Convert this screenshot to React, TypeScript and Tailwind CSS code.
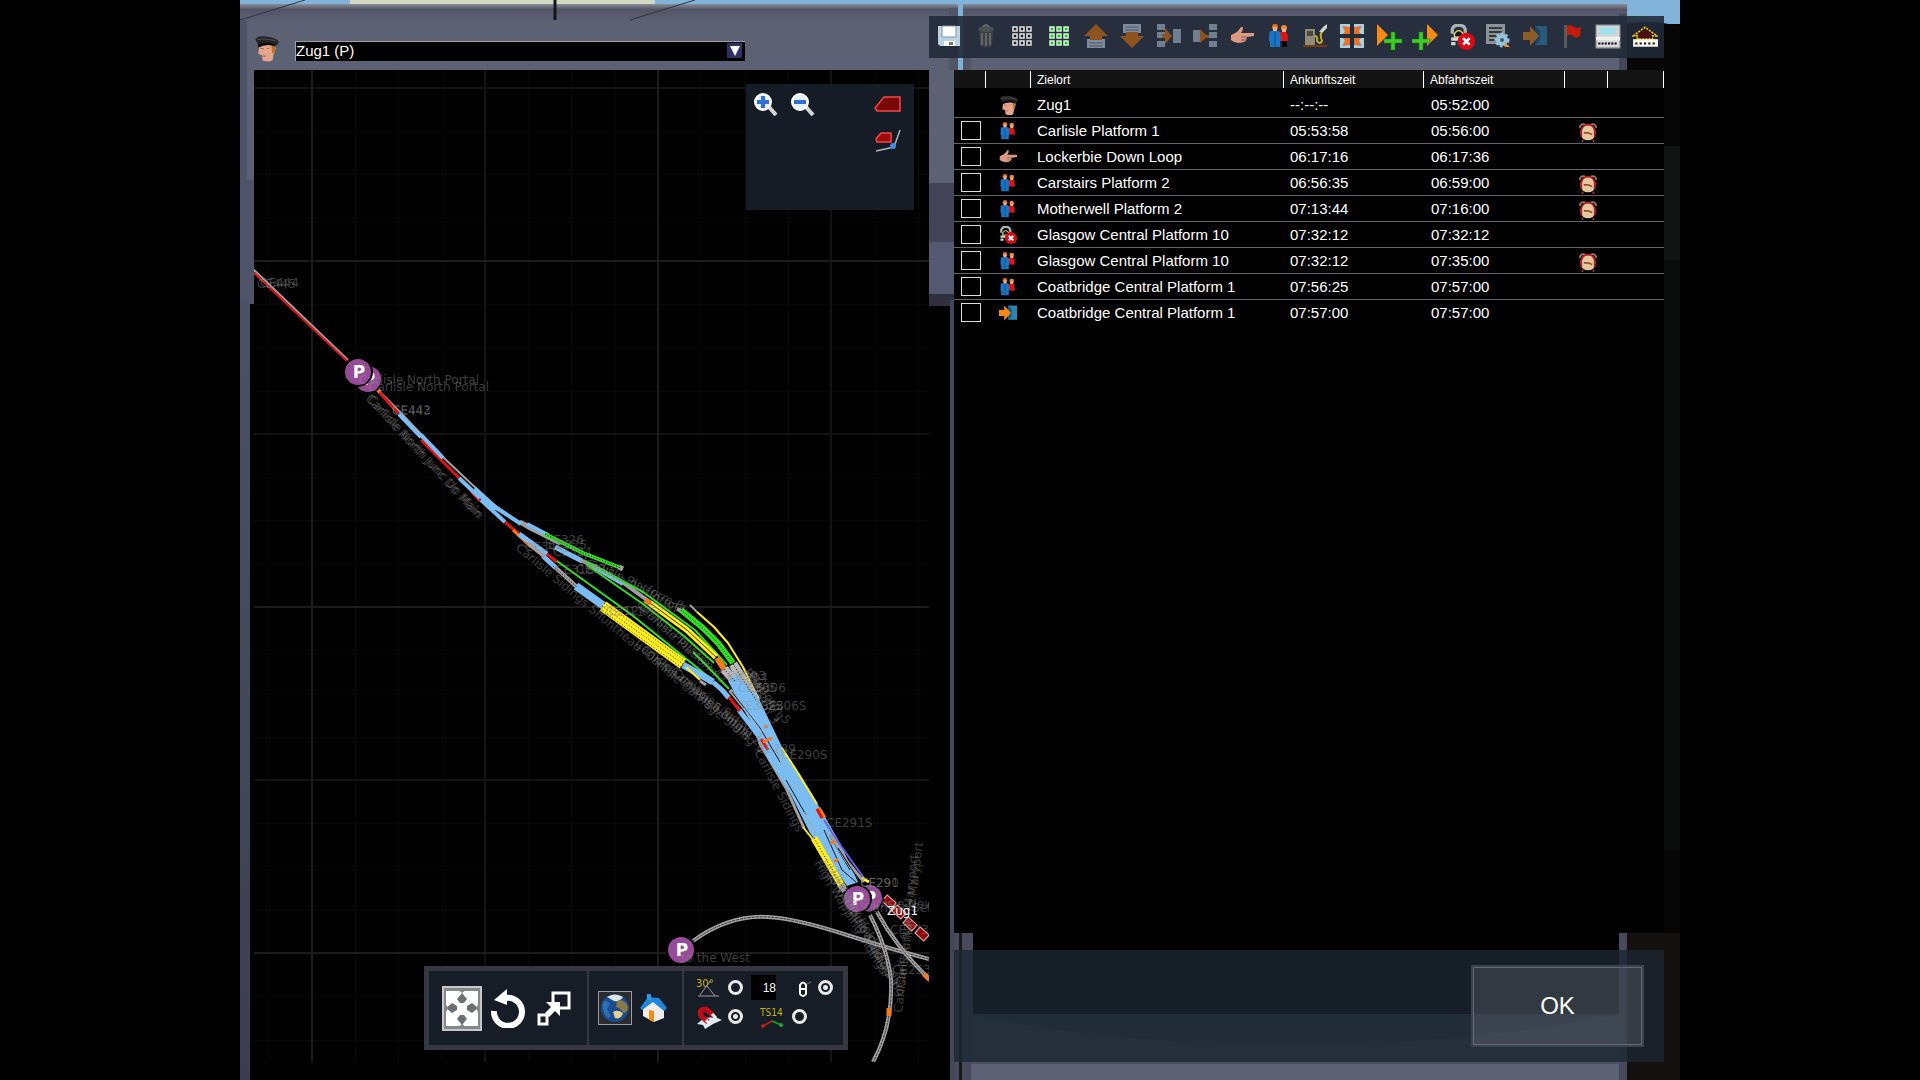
import React from 'react'

type IconProps = { className?: string }

const Icon = ({ children, className = 'size-6' }: { children: React.ReactNode, className?: string }) => (
  <svg viewBox="0 0 24 24" className={className} aria-hidden="true">{children}</svg>
)

const DriverIcon = ({ className }: IconProps) => (
  <Icon className={className}>
    <path d="M5 9 L4 17 L7 18 L8 23 Q13 25 17 23 L18 18 L20 12 L19 8 Z" fill="#e5a58c" />
    <path d="M16 9 L20 8 L19 15 L17 17 Z" fill="#b8741f" />
    <path d="M6 12 L9 12 M12 12 L14 12 M7 19 L11 19" stroke="#a86b58" strokeWidth="1" />
    <path d="M1 4 Q3 0 11 1 Q21 2 23 6 Q22 9 19 10 Q12 7 4 11 Q4 7 1 4 Z" fill="#262626" />
    <path d="M4 8 Q11 5 19 8 L19 10 Q12 7 4 11 Z" fill="#0b0b0b" />
    <path d="M3 4 Q10 2 20 5" stroke="#4b4b4b" fill="none" />
  </Icon>
)

const PeopleIcon = ({ className }: IconProps) => (
  <Icon className={className}>
    <circle cx="17" cy="4" r="3" fill="#f08a3c" />
    <path d="M13 8 H19 Q21 9 21 17 H14 Z" fill="#e01313" />
    <path d="M15 17 H20 V23 H15 Z" fill="#050505" />
    <path d="M15 5 H19 V8 H15 Z" fill="#eeb08a" />
    <circle cx="8" cy="3" r="3" fill="#e07018" />
    <path d="M6 3 H10 V8 H6 Z" fill="#f0ae84" />
    <path d="M3 7 H12 Q14 8 14 17 H13 V23 H3 V17 H2 Q2 8 3 7 Z" fill="#1874c4" />
    <path d="M8 8 V23" stroke="#0d4d8c" />
  </Icon>
)

const HandIcon = ({ className }: IconProps) => (
  <Icon className={className}>
    <path d="M1 11 L7 8 Q10 5 11 3 L13 3 Q13 7 11 9 L24 9 L24 12 L17 13 L16 17 Q13 19 8 19 Q3 18 1 16 Z" fill="#dc9a80" />
    <path d="M11 13 H17 M11 16 H16" stroke="#8f5442" />
  </Icon>
)

const UncoupleIcon = ({ className }: IconProps) => (
  <Icon className={className}>
    <path d="M3 9 V5 Q4 1 9 1 Q14 1 15 5 V9" fill="none" stroke="#a9b3b5" strokeWidth="3" />
    <path d="M5 9 Q9 3 13 9 L12 12 H5 Z" fill="#111" stroke="#d8c85e" strokeWidth="1.5" />
    <path d="M2 14 H12 M2 18 H6" stroke="#d4d6d0" strokeWidth="3" />
    <circle cx="16" cy="16" r="8" fill="#dc0a14" />
    <path d="M13 13 L19 19 M19 13 L13 19" stroke="#fff" strokeWidth="2.5" />
  </Icon>
)

const ExitIcon = ({ className }: IconProps) => (
  <Icon className={className}>
    <path d="M12 2 H24 V21 H12 Z" fill="#2a86b4" />
    <path d="M12 2 L17 7 V17 L12 21 Z" fill="#175a7d" />
    <path d="M0 8 H7 V2 L16 12 L7 22 V16 H0 Z" fill="#f28a12" />
  </Icon>
)

const ClockIcon = ({ className }: IconProps) => (
  <Icon className={className}>
    <path d="M2 7 Q3 1 9 3 M22 7 Q21 1 15 3" stroke="#9c7c70" strokeWidth="2" fill="none" />
    <path d="M6 21 L5 24 M18 21 L19 24" stroke="#a8323a" strokeWidth="2" />
    <circle cx="12" cy="13" r="9" fill="#e3c99c" />
    <path d="M4 18 V10 Q6 3 12 3 Q18 3 20 10 V18" stroke="#c4162a" strokeWidth="2" fill="none" />
    <path d="M7 13 H12 L17 15" stroke="#9c4a30" strokeWidth="2" fill="none" />
  </Icon>
)

const SaveIcon = () => (
  <Icon>
    <path d="M1 2 H23 V22 H3 L1 20 Z" fill="#b9d3e2" />
    <path d="M5 2 H19 V13 H5 Z" fill="#fff" stroke="#7f95a3" />
    <path d="M7 17 H18 V22 H7 Z" fill="#fff" />
    <path d="M12 18 H16 V21 H12 Z" fill="#7d7466" />
  </Icon>
)

const TrashIcon = () => (
  <Icon>
    <path d="M5 7 H19 L18 22 Q12 25 6 22 Z" fill="#3c4044" />
    <path d="M8 9 V21 M12 9 V22 M16 9 V21" stroke="#62676a" strokeWidth="2" />
    <ellipse cx="12" cy="5" rx="8" ry="3" fill="#4c5155" />
    <path d="M9 3 Q12 -1 15 3" stroke="#62676a" strokeWidth="2" fill="none" />
  </Icon>
)

const GridIcon = ({ fill, stroke }: { fill: string, stroke: string }) => (
  <Icon>
    {[5, 12, 19].map((y) => [5, 12, 19].map((x) => (
      <rect key={`${x}-${y}`} x={x - 2} y={y - 2} width="4" height="4" fill={fill} stroke={stroke} strokeWidth="1.5" />
    )))}
  </Icon>
)

const MoveUpIcon = () => (
  <Icon>
    <path d="M3 15 H21 V24 H3 Z" fill="#7f8c9c" />
    <path d="M5 19 H19 M5 22 H19" stroke="#4d5866" />
    <path d="M12 0 L24 12 H18 V16 H6 V12 H0 Z" fill="#8d5420" />
  </Icon>
)

const MoveDownIcon = () => (
  <Icon>
    <path d="M3 0 H21 V9 H3 Z" fill="#7f8c9c" />
    <path d="M5 3 H19 M5 6 H19" stroke="#4d5866" />
    <path d="M12 24 L24 12 H18 V8 H6 V12 H0 Z" fill="#8d5420" />
  </Icon>
)

const MergeIcon = () => (
  <Icon>
    <path d="M0 0 H8 V6 H0 Z M0 8 H8 V14 H0 Z M0 17 H8 V23 H0 Z M16 5 H24 V19 H16 Z" fill="#6f7f8f" />
    <path d="M5 10 H8 V4 L15 12 L8 20 V14 H5 Z" fill="#8d5420" />
  </Icon>
)

const SplitIcon = () => (
  <Icon>
    <path d="M16 0 H24 V6 H16 Z M16 8 H24 V14 H16 Z M16 17 H24 V23 H16 Z M0 6 H7 V18 H0 Z" fill="#6f7f8f" />
    <path d="M7 5 L13 11 H16 V14 H13 L7 19 Z" fill="#8d5420" />
  </Icon>
)

const FuelIcon = () => (
  <Icon>
    <path d="M0 21 H24 V23 H0 Z" fill="#7a3a10" />
    <path d="M2 5 H12 V21 H2 Z" fill="#8f8b77" />
    <path d="M4 7 H10 V12 H4 Z" fill="#4a4a3f" />
    <path d="M12 12 Q15 12 14 17 Q17 21 19 17 Q16 9 20 7" stroke="#c5b020" strokeWidth="2" fill="none" />
    <path d="M16 8 L20 3 L24 0 L24 4 L20 8 Z" fill="#d2d4d0" />
  </Icon>
)

const CenterIcon = () => (
  <Icon>
    <path d="M0 0 H24 V24 H0 Z" fill="#a6d2e6" />
    <path d="M10 0 H14 V24 H10 Z M0 10 H24 V14 H0 Z" fill="#242c39" />
    <path d="M2 2 L10 3 L10 10 L3 10 L5 7 Z M22 2 L14 3 L14 10 L21 10 L19 7 Z M2 22 L10 21 L10 14 L3 14 L5 17 Z M22 22 L14 21 L14 14 L21 14 L19 17 Z" fill="#e8722a" />
  </Icon>
)

const Plus = ({ x }: { x: number }) => (
  <path d={`M${x + 7} 8 h4 v7 h7 v4 h-7 v7 h-4 v-7 h-7 v-4 h7 Z`} fill="#3ecb28" stroke="#1a8010" strokeWidth="0.5" />
)

const InsertAfterIcon = () => (
  <svg viewBox="0 0 26 26" className="size-[26px] shrink-0" aria-hidden="true">
    <path d="M1 0 L12 11 L1 22 Z" fill="#f58a14" />
    <Plus x={8} />
  </svg>
)

const InsertBeforeIcon = () => (
  <svg viewBox="0 0 26 26" className="size-[26px] shrink-0" aria-hidden="true">
    <path d="M15 0 L26 11 L15 22 Z" fill="#f58a14" />
    <Plus x={0} />
  </svg>
)

const ScheduleIcon = () => (
  <Icon>
    <path d="M0 0 H19 V20 H0 Z" fill="#8b9397" />
    <path d="M3 4 H16 M3 8 H16 M3 12 H12 M3 16 H10" stroke="#333a42" strokeWidth="2" />
    <circle cx="16" cy="16" r="6" fill="#94c4dc" stroke="#94c4dc" strokeWidth="3" strokeDasharray="2.4 2" />
    <circle cx="16" cy="16" r="2" fill="#41586a" />
    <path d="M19 18 L24 23 H19 Z" fill="#f08a2c" />
  </Icon>
)

const FlagIcon = () => (
  <Icon>
    <path d="M4 1 H7 V24 H4 Z" fill="#5a5a5a" />
    <path d="M7 2 Q11 0 14 3 Q17 5 21 3 L20 12 Q15 15 13 12 Q10 9 7 12 Z" fill="#c41c0c" />
  </Icon>
)

const PlatformIcon = () => (
  <Icon className="size-[26px] shrink-0">
    <path d="M1 1 H23 V22 H1 Z" fill="#d8d8d8" stroke="#9b9b93" />
    <path d="M4 3 H20 V10 H4 Z" fill="#9fe0ec" />
    <path d="M1 12 H23 V15 H1 Z" fill="#f2f2ea" />
    <path d="M3 18 H21" stroke="#111" strokeWidth="2" strokeDasharray="2 1" />
  </Icon>
)

const DepotIcon = () => (
  <Icon className="size-[26px] shrink-0">
    <path d="M1 11 L12 3 L23 11 H19 V14 H5 V11 Z" fill="#4a1010" stroke="#e0c81c" strokeWidth="1.5" strokeDasharray="2 1" />
    <path d="M1 14 H24 V21 H1 Z" fill="#f5f5f0" />
    <path d="M3 18 H22" stroke="#111" strokeWidth="2" strokeDasharray="2 2" />
  </Icon>
)

const toolbar = [
  { label: 'Speichern', icon: <SaveIcon /> },
  { label: 'Löschen', icon: <TrashIcon /> },
  { label: 'Keine auswählen', icon: <GridIcon fill="#1d232e" stroke="#e6e6de" /> },
  { label: 'Alle auswählen', icon: <GridIcon fill="#12c81e" stroke="#d9f6d9" /> },
  { label: 'Nach oben', icon: <MoveUpIcon /> },
  { label: 'Nach unten', icon: <MoveDownIcon /> },
  { label: 'Verbinden', icon: <MergeIcon /> },
  { label: 'Trennen', icon: <SplitIcon /> },
  { label: 'Zielort', icon: <HandIcon className="size-6" /> },
  { label: 'Fahrgäste', icon: <PeopleIcon className="size-6" /> },
  { label: 'Tanken', icon: <FuelIcon /> },
  { label: 'Zentrieren', icon: <CenterIcon /> },
  { label: 'Danach einfügen', icon: <InsertAfterIcon /> },
  { label: 'Davor einfügen', icon: <InsertBeforeIcon /> },
  { label: 'Abkuppeln', icon: <UncoupleIcon className="size-[26px] shrink-0" /> },
  { label: 'Fahrplan', icon: <ScheduleIcon /> },
  { label: 'Ausfahrt', icon: <ExitIcon className="size-6 opacity-50" /> },
  { label: 'Flagge', icon: <FlagIcon /> },
  { label: 'Bahnsteig', icon: <PlatformIcon /> },
  { label: 'Depot', icon: <DepotIcon /> },
]

const stops = [
  { kind: 'people', place: 'Carlisle Platform 1', arrival: '05:53:58', departure: '05:56:00', alarm: true },
  { kind: 'hand', place: 'Lockerbie Down Loop', arrival: '06:17:16', departure: '06:17:36', alarm: false },
  { kind: 'people', place: 'Carstairs Platform 2', arrival: '06:56:35', departure: '06:59:00', alarm: true },
  { kind: 'people', place: 'Motherwell Platform 2', arrival: '07:13:44', departure: '07:16:00', alarm: true },
  { kind: 'uncouple', place: 'Glasgow Central Platform 10', arrival: '07:32:12', departure: '07:32:12', alarm: false },
  { kind: 'people', place: 'Glasgow Central Platform 10', arrival: '07:32:12', departure: '07:35:00', alarm: true },
  { kind: 'people', place: 'Coatbridge Central Platform 1', arrival: '07:56:25', departure: '07:57:00', alarm: false },
  { kind: 'exit', place: 'Coatbridge Central Platform 1', arrival: '07:57:00', departure: '07:57:00', alarm: false },
]

const StopIcon = ({ kind }: { kind: string }) => {
  if (kind === 'hand') return <HandIcon className="size-[18px]" />
  if (kind === 'uncouple') return <UncoupleIcon className="size-[18px]" />
  if (kind === 'exit') return <ExitIcon className="size-[18px]" />
  return <PeopleIcon className="size-[18px]" />
}

// 3D scene and window frames behind the panels
const Backdrop = () => (
  <svg viewBox="240 0 1440 1080" preserveAspectRatio="none" className="absolute inset-0 h-full w-full" aria-hidden="true">
    <defs>
      <linearGradient id="rim" x1="0" x2="0" y1="0" y2="1">
        <stop offset="0" stopColor="#8a8f98" />
        <stop offset="0.3" stopColor="#515567" />
        <stop offset="1" stopColor="#5d6174" />
      </linearGradient>
      <linearGradient id="post" x1="0" x2="0" y1="0" y2="1">
        <stop offset="0" stopColor="#4d5166" />
        <stop offset="1" stopColor="#3c3e4f" />
      </linearGradient>
    </defs>
    <path d="M240 0 H1680 V1080 H240 Z" fill="#000" />
    <path d="M240 0 H1680 V24 H240 Z" fill="#82b4da" />
    <path d="M350 0 H655 V5 H350 Z" fill="#d3d8c4" />
    <path d="M240 4 H1627 V22 H240 Z" fill="url(#rim)" />
    <path d="M240 20 H1627 V70 H240 Z" fill="#5d6174" />
    <path d="M1619 14 H1627 V70 H1619 Z" fill="#454759" />
    <path d="M240 20 L305 0 M630 20 L695 0" stroke="#33343e" strokeWidth="1" />
    <path d="M555 0 V20" stroke="#15151a" strokeWidth="3" />
    <path d="M1627 23 Q1660 20 1680 27 V1080 H1627 Z" fill="#060606" />
    <path d="M1664 146 H1680 V260 H1664 Z" fill="#131514" />
    <path d="M1664 260 H1680 V850 H1664 Z" fill="#0b0c0c" />
    <path d="M1627 933 H1680 V1080 H1627 Z" fill="#14110e" />
    <path d="M240 20 H254 V304 H240 Z" fill="#4f5367" />
    <path d="M247 20 H254 V180 H247 Z" fill="#5d6174" />
    <path d="M240 300 H250 V1080 H240 Z" fill="url(#post)" />
    <path d="M929 70 H955 V183 H929 Z" fill="#5d6174" />
    <path d="M929 183 H955 V242 H929 Z" fill="#444458" />
    <path d="M929 242 H955 V304 H929 Z" fill="#545870" />
    <path d="M929 294 H955 V306 H929 Z" fill="#30313f" />
    <path d="M950 300 H954 V1080 H950 Z" fill="#434659" />
    <path d="M949 8 H958 V70 H949 Z" fill="#515467" />
    <path d="M958 3 H963 V70 H958 Z" fill="#7fb1d3" />
    <path d="M963 20 H971 V70 H963 Z" fill="#515467" />
    <path d="M954 933 H973 V1080 H954 Z" fill="#484a5c" />
    <path d="M959 933 H962 V1080 H959 Z" fill="#191919" />
    <path d="M1619 933 H1627 V1080 H1619 Z" fill="#484a5c" />
    <path d="M973 1014 H1619 V1080 H973 Z" fill="#4b4f62" />
    <path d="M973 1014 H1619 Q1480 1044 1290 1044 Q1100 1044 973 1014 Z" fill="#3d4152" />
    <path d="M971 1064 H1619 V1080 H971 Z" fill="#5d6174" />
  </svg>
)

const majorX = [312, 658]
const mediumX = [485, 831]
const minorX = [269, 355, 398, 442, 528, 571, 615, 701, 745, 788, 874, 918]
const majorY = [261, 607, 953]
const mediumY = [88, 434, 780]
const minorY = [131, 174, 218, 304, 347, 391, 477, 520, 564, 650, 693, 737, 823, 866, 910, 996, 1040]

const vertical = (xs: number[]) => xs.map((x) => `M${x} 70 V1062`).join(' ')
const horizontal = (ys: number[]) => ys.map((y) => `M254 ${y} H929`).join(' ')

const GREY = '#a3a0a2'
const BLUE = '#7bbcf2'
const RED = '#e01414'
const GREEN = '#2fe01e'
const YELLOW = '#ffee1c'
const ORANGE = '#f47a1a'
const PURPLE = '#6a62e8'

const tracks = [
  // northern approach
  { d: 'M253 269 L348 360', c: GREY, w: 2 },
  { d: 'M253 272 L347 361', c: RED, w: 2 },
  { d: 'M377 389 L400 412 L443 457 L480 492', c: GREY, w: 2 },
  { d: 'M379 392 L398 413 M421 440 L459 478 M471 491 L480 501 M505 522 L519 534', c: RED, w: 3 },
  { d: 'M377 389 L380 392', c: ORANGE, w: 4 },
  { d: 'M490 505 L530 529 L560 544 M520 521 L528 525', c: GREY, w: 3 },
  { d: 'M399 414 L421 437 M421 435 L443 458 M459 478 L480 498 M476 491 L494 506 L521 524 M481 500 L505 522 M527 524 L548 535', c: BLUE, w: 4 },
  { d: 'M474 489 L496 509', c: BLUE, w: 6 },
  { d: 'M513 530 L531 547', c: ORANGE, w: 3 },
  { d: 'M519 534 L547 554 M543 556 L556 568 M555 547 L582 561', c: BLUE, w: 5 },
  { d: 'M529 544 L545 557 M555 567 L577 587', c: GREY, w: 4 },
  { d: 'M547 554 L557 562', c: RED, w: 3 },
  // station throat, north side
  { d: 'M545 534 L583 553 L621 568', c: GREEN, w: 4 },
  { d: 'M619 567 L623 569', c: GREY, w: 5 },
  { d: 'M580 560 L594 566 L622 582 L647 600', c: GREY, w: 4 },
  { d: 'M592 566 L623 584', c: BLUE, w: 4 },
  { d: 'M557 561 L632 615 L710 678', c: GREEN, w: 2 },
  { d: 'M585 561 L643 592 L695 630 L727 665', c: GREEN, w: 2 },
  { d: 'M587 565 L643 604 L685 637 L714 663', c: GREEN, w: 2 },
  { d: 'M650 603 L687 630 L716 657', c: YELLOW, w: 6 },
  { d: 'M650 603 L687 630 L716 657', c: '#3b3800', w: 1 },
  { d: 'M645 600 L650 603 M717 658 L724 669', c: ORANGE, w: 6 },
  { d: 'M677 609 L682 611', c: GREY, w: 4 },
  { d: 'M681 610 L703 628 L718 643 L733 663', c: GREEN, w: 6 },
  { d: 'M690 605 L697 612', c: GREY, w: 2 },
  { d: 'M697 612 L714 627 L728 643 L743 667 L759 700', c: YELLOW, w: 2 },
  { d: 'M693 652 L707 666 L729 689', c: GREEN, w: 2 },
  { d: 'M724 669 L735 681 M733 664 L756 700', c: '#b9b9b9', w: 9 },
  // carriage sidings
  { d: 'M576 586 L604 606', c: BLUE, w: 8 },
  { d: 'M603 606 L683 664', c: YELLOW, w: 11 },
  { d: 'M683 665 L701 675 L713 682', c: BLUE, w: 7 },
  { d: 'M713 682 L722 690 L729 698', c: BLUE, w: 5 },
  { d: 'M686 667 L700 680', c: YELLOW, w: 2 },
  { d: 'M700 681 L706 685', c: GREY, w: 3 },
  { d: 'M739 710 L758 735 L770 758', c: BLUE, w: 5 },
  { d: 'M729 697 L740 711', c: RED, w: 3 },
  { d: 'M730 690 L756 722 L782 766', c: GREY, w: 4 },
  { d: 'M759 742 L786 788 L804 828', c: GREY, w: 3 },
]

const throat = [
  { d: 'M732 692 L760 728 L780 762 M786 780 L806 815 M824 830 L842 870 L856 882 M850 870 L830 836', c: '#191919', w: 1 },
  { d: 'M744 708 L762 732 M776 748 L782 766 M790 784 L797 792 M804 812 L816 834', c: '#a7a7a7', w: 1 },
  { d: 'M830 834 L846 860 L864 882', c: GREY, w: 3 },
  { d: 'M838 848 L860 882', c: '#111', w: 1 },
  { d: 'M782 748 L800 776 L817 804', c: YELLOW, w: 2 },
  { d: 'M803 827 L814 841', c: YELLOW, w: 2 },
  { d: 'M814 838 L843 888', c: YELLOW, w: 7 },
  { d: 'M841 885 L845 891', c: GREY, w: 6 },
  { d: 'M818 808 L824 818', c: ORANGE, w: 5 },
  { d: 'M817 809 L822 818', c: RED, w: 3 },
  { d: 'M824 820 L838 842 L864 878', c: PURPLE, w: 2 },
  { d: 'M862 878 L869 882', c: YELLOW, w: 3 },
  { d: 'M761 739 L768 750', c: RED, w: 3 },
  { d: 'M763 742 L772 738 M765 725 L767 728 M830 843 L835 842 M834 862 L838 859', c: ORANGE, w: 3 },
]

const hatched = [
  'M545 534 L583 553 L621 568',
  'M681 610 L703 628 L718 643 L733 663',
  'M724 669 L735 681 M733 664 L756 700',
  'M814 838 L843 888',
  'M553 566 L577 587',
]

const southern = [
  'M693 941 Q729 915 767 917 Q795 918 850 936 Q890 949 929 959',
  'M870 915 Q888 950 891 980 Q893 1025 873 1062',
  'M877 912 Q895 945 927 977',
]

const labels = [
  { text: 'CE444', x: 260, y: 287, r: 0 },
  { text: 'CE445', x: 257, y: 288, r: 0 },
  { text: 'Carlisle North Portal', x: 359, y: 384, r: 0 },
  { text: 'Carlisle North Portal', x: 369, y: 391, r: 0 },
  { text: 'CE442', x: 392, y: 414, r: 0 },
  { text: 'CE443', x: 392, y: 415, r: 0 },
  { text: 'Carlisle North Junc Dn Main', x: 365, y: 399, r: 47 },
  { text: 'Carlisle North Junc Up Main', x: 367, y: 400, r: 47 },
  { text: 'CE326', x: 545, y: 544, r: 0 },
  { text: 'CE325', x: 548, y: 549, r: 0 },
  { text: 'CE324', x: 553, y: 556, r: 0 },
  { text: 'CE344', x: 525, y: 551, r: 0 },
  { text: 'CE318', x: 555, y: 574, r: 0 },
  { text: 'CE313', x: 576, y: 573, r: 0 },
  { text: 'CE312', x: 600, y: 615, r: 0 },
  { text: 'CE311', x: 605, y: 616, r: 0 },
  { text: 'CE307', x: 640, y: 612, r: 0 },
  { text: 'Carlisle Platform 8', x: 582, y: 562, r: 26 },
  { text: 'Carlisle Platform 7', x: 584, y: 566, r: 26 },
  { text: 'Carlisle Platform 4', x: 636, y: 605, r: 42 },
  { text: 'Carlisle Platform 3', x: 640, y: 611, r: 42 },
  { text: 'Carlisle Sidings Shunthead', x: 515, y: 549, r: 40 },
  { text: 'Carlisle Cumbrian Siding 1', x: 634, y: 645, r: 38 },
  { text: 'Carlisle Carriage Siding 2', x: 640, y: 651, r: 39 },
  { text: 'Carlisle Carriage Siding 3', x: 644, y: 656, r: 40 },
  { text: 'Carriage Sidings', x: 670, y: 672, r: 41 },
  { text: 'CE304', x: 729, y: 682, r: 0 },
  { text: 'CE303', x: 727, y: 680, r: 0 },
  { text: 'CE305', x: 738, y: 692, r: 0 },
  { text: 'CE306', x: 747, y: 692, r: 0 },
  { text: 'CE306S', x: 760, y: 710, r: 0 },
  { text: 'CE302S', x: 737, y: 710, r: 0 },
  { text: 'Platform 1', x: 743, y: 672, r: 56 },
  { text: 'Platform 3', x: 738, y: 674, r: 56 },
  { text: 'Platform 5', x: 747, y: 676, r: 52 },
  { text: 'Carlisle Sidings', x: 754, y: 752, r: 62 },
  { text: 'CE289', x: 757, y: 753, r: 0 },
  { text: 'CE290S', x: 781, y: 759, r: 0 },
  { text: 'CE291S', x: 826, y: 827, r: 0 },
  { text: 'CE290', x: 860, y: 887, r: 0 },
  { text: 'CE291', x: 860, y: 887, r: 0 },
  { text: 'High Wapping Sidings', x: 814, y: 863, r: 59 },
  { text: 'High Wapping Siding 2', x: 820, y: 862, r: 60 },
  { text: 'High Wapping Siding 3', x: 826, y: 868, r: 61 },
  { text: 'Upperby Holding Siding', x: 832, y: 872, r: 62 },
  { text: 'Carlisle South Jn to Maryport', x: 902, y: 1013, r: -83 },
  { text: 'Carlisle from Maryport', x: 904, y: 988, r: -84 },
  { text: 'CE273', x: 890, y: 934, r: 0 },
  { text: 'CE253', x: 892, y: 974, r: 0 },
  { text: 'Carlisle Newcastle', x: 860, y: 908, r: 0 },
  { text: 'Carlisle Settle', x: 864, y: 912, r: 0 },
]

const portals = [
  { x: 368, y: 379 },
  { x: 358, y: 372 },
  { x: 869, y: 898 },
  { x: 857, y: 899 },
  { x: 681, y: 950 },
]

const cars = [
  { x: 889, y: 902 },
  { x: 899, y: 912 },
  { x: 910, y: 924 },
  { x: 922, y: 934 },
]

const TrackMap = () => (
  <svg viewBox="254 70 675 992" preserveAspectRatio="xMaxYMin slice" className="h-full w-full bg-black" role="img" aria-label="Gleisplan Carlisle">
    <g fill="none" shapeRendering="crispEdges">
      <path d={`${vertical(minorX)} ${horizontal(minorY)}`} stroke="#080808" strokeWidth="1" />
      <path d={`${vertical(mediumX)} ${horizontal(mediumY)}`} stroke="#131313" strokeWidth="2" />
      <path d={`${vertical(majorX)} ${horizontal(majorY)}`} stroke="#1c1c1c" strokeWidth="2" />
    </g>
    <g fill="none" strokeLinejoin="round">
      {southern.map((d) => (
        <g key={d}>
          <path d={d} stroke={GREY} strokeWidth="4" />
          <path d={d} stroke="#333" strokeWidth="1" strokeDasharray="3 1" />
        </g>
      ))}
      <path d="M889 1008 V1016 M924 974 L930 980" stroke={ORANGE} strokeWidth="5" />
      {tracks.map((t) => <path key={t.d + t.c} d={t.d} stroke={t.c} strokeWidth={t.w} />)}
      <path
        d="M728 681 L736 674 L759 699 L782 747 L817 803 L840 843 L858 882 L847 886 L810 833 L790 793 L767 757 L754 728 Z"
        fill={BLUE}
      />
      {throat.map((t) => <path key={t.d + t.c} d={t.d} stroke={t.c} strokeWidth={t.w} />)}
      {hatched.map((d) => <path key={d} d={d} stroke="#000" strokeWidth="1" strokeDasharray="1 2" />)}
      <path d="M600 609 L681 667 M602 606 L683 664 M604 603 L685 661" stroke="#3b3800" strokeWidth="1" strokeDasharray="1 2" />
    </g>
    {cars.map((c) => (
      <rect
        key={c.x} x={c.x - 6} y={c.y - 4} width="12" height="8" fill="#8c0a0e" stroke="#f0b0a4"
        transform={`rotate(42 ${c.x} ${c.y})`}
      />
    ))}
    {portals.map((p) => (
      <g key={p.x}>
        <circle cx={p.x} cy={p.y} r="14" fill="#964a98" stroke="#000" strokeWidth="2" />
        <text x={p.x + 1} y={p.y + 6} textAnchor="middle" fill="#fff" className="font-['DejaVu_Sans'] text-[17px] font-bold">P</text>
      </g>
    ))}
    <g fill="#8c8c8c" fillOpacity="0.45" className="font-['DejaVu_Sans'] text-[12px]">
      {labels.map((l, i) => (
        <text key={i} x={l.x} y={l.y} transform={`rotate(${l.r} ${l.x} ${l.y})`}>{l.text}</text>
      ))}
      <text x="681" y="962">to the West</text>
    </g>
    <text x="887" y="915" fill="#fff" className="font-['DejaVu_Sans'] text-[12px]">Zug1</text>
  </svg>
)

const ZoomIcon = ({ plus }: { plus?: boolean }) => (
  <Icon>
    <path d="M15 15 L22 23" stroke="#d6d6d6" strokeWidth="4" />
    <circle cx="9" cy="10" r="8" fill="#e6f1fb" stroke="#fff" strokeWidth="2" />
    <path d={plus ? 'M9 4 V16 M3 10 H15' : 'M3 10 H15'} stroke="#2f6fd6" strokeWidth="4" />
  </Icon>
)

const ViewPanel = () => (
  <div className="absolute top-[14px] right-[15px] flex h-[126px] w-[168px] justify-between bg-[#161c26] py-2 pr-3 pl-2">
    <div className="flex items-start gap-[13px]">
      <button type="button" aria-label="Vergrößern"><ZoomIcon plus /></button>
      <button type="button" aria-label="Verkleinern"><ZoomIcon /></button>
    </div>
    <div className="flex flex-col gap-4 pt-[3px]">
      <button type="button" aria-label="Zug folgen">
        <svg viewBox="0 0 28 18" className="h-[18px] w-7" aria-hidden="true">
          <path d="M10 2 H26 V16 H3 L1 13 Z" fill="#7a0808" stroke="#f04848" strokeWidth="1.5" />
        </svg>
      </button>
      <button type="button" aria-label="Fahrweg">
        <svg viewBox="0 0 28 24" className="h-6 w-7" aria-hidden="true">
          <path d="M7 4 H17 V13 H3 L2 10 Z" fill="#9c0c0c" stroke="#f04848" strokeWidth="1.5" />
          <path d="M2 22 L20 18 L26 1" stroke="#a9b4bd" strokeWidth="1.5" fill="none" />
          <circle cx="19" cy="17" r="3" fill="#3f8be0" />
        </svg>
      </button>
    </div>
  </div>
)

const Radio = ({ name, label, defaultChecked }: { name: string, label: string, defaultChecked?: boolean }) => (
  <input
    type="radio"
    name={name}
    aria-label={label}
    defaultChecked={defaultChecked}
    className="size-[15px] shrink-0 appearance-none rounded-full border-[3px] border-[#e8e8e8] checked:bg-[radial-gradient(circle,#e8e8e8_0_2px,transparent_3px)]"
  />
)

const MapTools = () => (
  <div className="absolute bottom-3 left-[170px] flex h-[84px] w-[424px] border-[5px] border-[#363841] bg-[#171d27]">
    <div className="flex w-[160px] items-center gap-2 border-r-2 border-[#363841] pl-[13px]">
      <button type="button" aria-label="Einpassen" className="border-2 border-[#c6c8ca] bg-[#85888b]">
        <svg viewBox="0 0 36 41" className="h-[41px] w-9" aria-hidden="true">
          <path d="M2 3 H34 V38 H2 Z" fill="#fff" />
          <path d="M18 5 L23 11 L20 15 H16 L13 11 Z M18 37 L23 31 L20 27 H16 L13 31 Z M2 20 L8 15 L13 18 V22 L8 25 Z M34 20 L28 15 L23 18 V22 L28 25 Z" fill="#6d7073" />
          <path d="M14 2 H22 L18 5 Z M14 39 H22 L18 36 Z M1 15 V26 L4 20 Z M35 15 V26 L32 20 Z" fill="#85888b" />
        </svg>
      </button>
      <button type="button" aria-label="Drehen">
        <svg viewBox="0 0 36 40" className="h-10 w-9" aria-hidden="true">
          <path d="M4 23 A14 14 0 1 0 16 10" fill="none" stroke="#fff" strokeWidth="6" />
          <path d="M17 1 V17 L4 12 Z" fill="#fff" />
        </svg>
      </button>
      <button type="button" aria-label="Skalieren" className="pl-[3px]">
        <svg viewBox="0 0 34 36" className="h-9 w-[34px]" aria-hidden="true">
          <path d="M16 3 H32 V18 H16 Z M2 25 H10 V34 H2 Z" fill="none" stroke="#fff" strokeWidth="3" />
          <path d="M9 12 H23 V26 L18 21 L12 27 L8 23 L14 17 Z" fill="#fff" />
        </svg>
      </button>
    </div>
    <div className="flex w-[95px] items-center gap-[7px] border-r-2 border-[#363841] pl-[9px]">
      <button type="button" aria-label="Satellitenbild" className="border border-[#9a9c9e] bg-[#2c2b2f]">
        <svg viewBox="0 0 32 32" className="size-8" aria-hidden="true">
          <circle cx="16" cy="16" r="14" fill="#184c8c" />
          <path d="M8 5 Q16 0 24 5 Q21 10 15 9 Z" fill="#dfe4e6" />
          <path d="M4 10 Q8 7 11 12 L8 17 L12 24 L9 26 Q2 20 4 10 Z" fill="#2f6fb5" />
          <path d="M18 9 Q26 6 29 15 Q29 20 25 21 L20 16 L17 15 Z" fill="#8c7848" />
          <path d="M14 20 Q18 17 24 21 Q22 28 16 26 Z" fill="#e6cf94" />
        </svg>
      </button>
      <button type="button" aria-label="Startpunkt">
        <svg viewBox="0 0 28 30" className="h-[30px] w-7" aria-hidden="true">
          <path d="M4 13 L14 6 L25 15 V25 L15 29 L4 23 Z" fill="#ececec" />
          <path d="M10 17 L15 18 V29 L10 27 Z" fill="#f08c14" />
          <path d="M1 15 L9 4 L20 5 L28 15 L25 18 L14 9 L3 17 Z" fill="#1f86d8" />
          <path d="M8 1 H12 V7 H8 Z" fill="#2a9ae8" />
        </svg>
      </button>
    </div>
    <div className="flex flex-1 flex-col gap-1 pt-1 pl-3">
      <div className="flex h-[25px] items-center">
        <svg viewBox="0 0 26 24" className="h-6 w-[26px]" aria-hidden="true">
          <text x="0" y="11" fill="#c2b000" className="font-['DejaVu_Sans'] text-[10px]">30°</text>
          <path d="M2 20 H23 M4 19 L15 4 M11 10 L19 20" stroke="#9c9c9c" fill="none" />
        </svg>
        <div className="flex w-[29px] pl-[6px]"><Radio name="winkel" label="30 Grad" /></div>
        <input
          type="text"
          aria-label="Zoomstufe"
          defaultValue="18"
          className="h-[25px] w-[25px] bg-black text-right text-[12px] text-white outline-none"
        />
        <svg viewBox="0 0 16 20" className="ml-5 h-5 w-4" aria-hidden="true">
          <path d="M4 12 V7 Q7 2 10 7 V16 Q7 20 4 16 Z M4 11 H10" fill="none" stroke="#fff" strokeWidth="2" />
          <path d="M11 6 L15 4" stroke="#777" />
        </svg>
        <div className="flex pl-[6px]"><Radio name="sperre" label="Sperren" defaultChecked /></div>
      </div>
      <div className="flex h-[25px] items-center">
        <svg viewBox="0 0 26 24" className="h-6 w-[26px]" aria-hidden="true">
          <path d="M1 19 L8 13 L19 12 L26 15 L17 19 L9 24 L7 20 Z" fill="#dceaf4" />
          <path d="M12 17 L5 11 Q2 4 10 4 L18 11" fill="none" stroke="#c00d18" strokeWidth="5" />
          <path d="M16 9 L20 13 M10 15 L14 19" stroke="#f0f0f0" strokeWidth="3" />
        </svg>
        <div className="flex w-[38px] pl-[6px]"><Radio name="magnet" label="Einrasten" defaultChecked /></div>
        <svg viewBox="0 0 26 24" className="h-6 w-[26px]" aria-hidden="true">
          <text x="0" y="11" fill="#c2b000" className="font-['DejaVu_Sans_Condensed'] text-[10px]">TS14</text>
          <path d="M3 21 L12 16" stroke="#c01c1c" strokeWidth="1.5" />
          <path d="M12 16 L21 20" stroke="#18a828" strokeWidth="1.5" />
          <circle cx="3" cy="21" r="2" fill="#c01c1c" />
          <circle cx="21" cy="20" r="2" fill="#18a828" />
        </svg>
        <div className="flex pl-[6px]"><Radio name="ts14" label="TS14" /></div>
      </div>
    </div>
  </div>
)

const TrainSelect = () => (
  <div className="flex h-[70px] items-start gap-[15px] pt-[35px]">
    <DriverIcon className="h-[27px] w-[26px]" />
    <div className="relative mt-[6px] h-5 w-[450px] border-t border-l border-[#a0a2a8] bg-black">
      <select aria-label="Zug" className="block h-[18px] w-full appearance-none bg-black text-[15px] leading-[18px] text-white outline-none">
        <option>Zug1 (P)</option>
      </select>
      <span className="pointer-events-none absolute top-[1px] right-[3px] flex size-[15px] items-center justify-center bg-[#2c3264]">
        <svg viewBox="0 0 10 10" className="size-[10px]" aria-hidden="true"><path d="M0 0 H10 L5 10 Z" fill="#fff" /></svg>
      </span>
    </div>
  </div>
)

const HeadCell = ({ children }: { children?: React.ReactNode }) => (
  <th className="bg-[#141414] p-0 text-left font-normal">
    <div className="mt-px flex h-[17px] items-center border-r border-white pl-[6px] leading-[14px]">{children}</div>
  </th>
)

const Timetable = () => (
  <div className="ml-[25px] min-h-0 flex-1 bg-black">
    <table className="w-full table-fixed border-separate border-spacing-0 text-[15px] leading-5 text-white">
      <colgroup>
        <col className="w-8" />
        <col className="w-[45px]" />
        <col className="w-[253px]" />
        <col className="w-[140px]" />
        <col className="w-[141px]" />
        <col className="w-[43px]" />
        <col className="w-[56px]" />
      </colgroup>
      <thead className="text-[12px]">
        <tr>
          <HeadCell />
          <HeadCell />
          <HeadCell>Zielort</HeadCell>
          <HeadCell>Ankunftszeit</HeadCell>
          <HeadCell>Abfahrtszeit</HeadCell>
          <HeadCell />
          <HeadCell />
        </tr>
      </thead>
      <tbody className="[&_td]:border-b [&_td]:border-[#646464] [&_td]:p-0 [&_tr:last-child_td]:border-transparent">
        <tr className="h-[30px]">
          <td />
          <td><DriverIcon className="mt-1 ml-[13px] h-[22px] w-5" /></td>
          <td><span className="block pt-1 pl-[6px]">Zug1</span></td>
          <td><span className="block pt-1 pl-[6px]">--:--:--</span></td>
          <td><span className="block pt-1 pl-[7px]">05:52:00</span></td>
          <td />
          <td />
        </tr>
        {stops.map((s, i) => (
          <tr key={i} className="h-[26px]">
            <td>
              <input
                type="checkbox"
                aria-label={`${s.place} ${s.departure}`}
                className="ml-[7px] block h-[19px] w-5 appearance-none border border-[#dcdcdc] bg-black checked:bg-[#c8c8c8]"
              />
            </td>
            <td><div className="pl-[13px]"><StopIcon kind={s.kind} /></div></td>
            <td className="whitespace-nowrap"><span className="pl-[6px]">{s.place}</span></td>
            <td><span className="pl-[6px]">{s.arrival}</span></td>
            <td><span className="pl-[7px]">{s.departure}</span></td>
            <td>{s.alarm && <ClockIcon className="mt-[2px] ml-[13px] h-5 w-5" />}</td>
            <td />
          </tr>
        ))}
      </tbody>
    </table>
  </div>
)

const App = () => {
  return (
    <div className="flex min-h-screen justify-center bg-black font-['Liberation_Sans',Arial,sans-serif]">
      <main className="relative flex min-h-screen w-3/4">
        <Backdrop />

        <section className="relative flex flex-[689] flex-col pb-[18px] pl-[14px]">
          <TrainSelect />
          <div className="relative flex-1">
            <div className="absolute inset-0"><TrackMap /></div>
            <ViewPanel />
            <MapTools />
          </div>
        </section>

        <section className="relative flex flex-[735] flex-col pt-4 pb-[18px]">
          <div className="mb-3 flex h-[42px] items-start justify-between bg-[#212a38]/90 pt-2 pr-[7px] pl-2">
            {toolbar.map((t) => (
              <button key={t.label} type="button" aria-label={t.label} title={t.label} className="flex w-6 justify-center">{t.icon}</button>
            ))}
          </div>

          <Timetable />

          <div className="mt-[17px] ml-[25px] flex h-28 items-center justify-end bg-[#1c2632]/80 pr-5">
            <button
              type="button"
              className="h-[82px] w-[173px] border-2 border-[#3c424e] bg-white/12 text-[24px] text-white outline outline-offset-[-3px] outline-[#626875]"
            >
              OK
            </button>
          </div>
        </section>
        <div className="w-4" />
      </main>
    </div>
  )
}

export default App
